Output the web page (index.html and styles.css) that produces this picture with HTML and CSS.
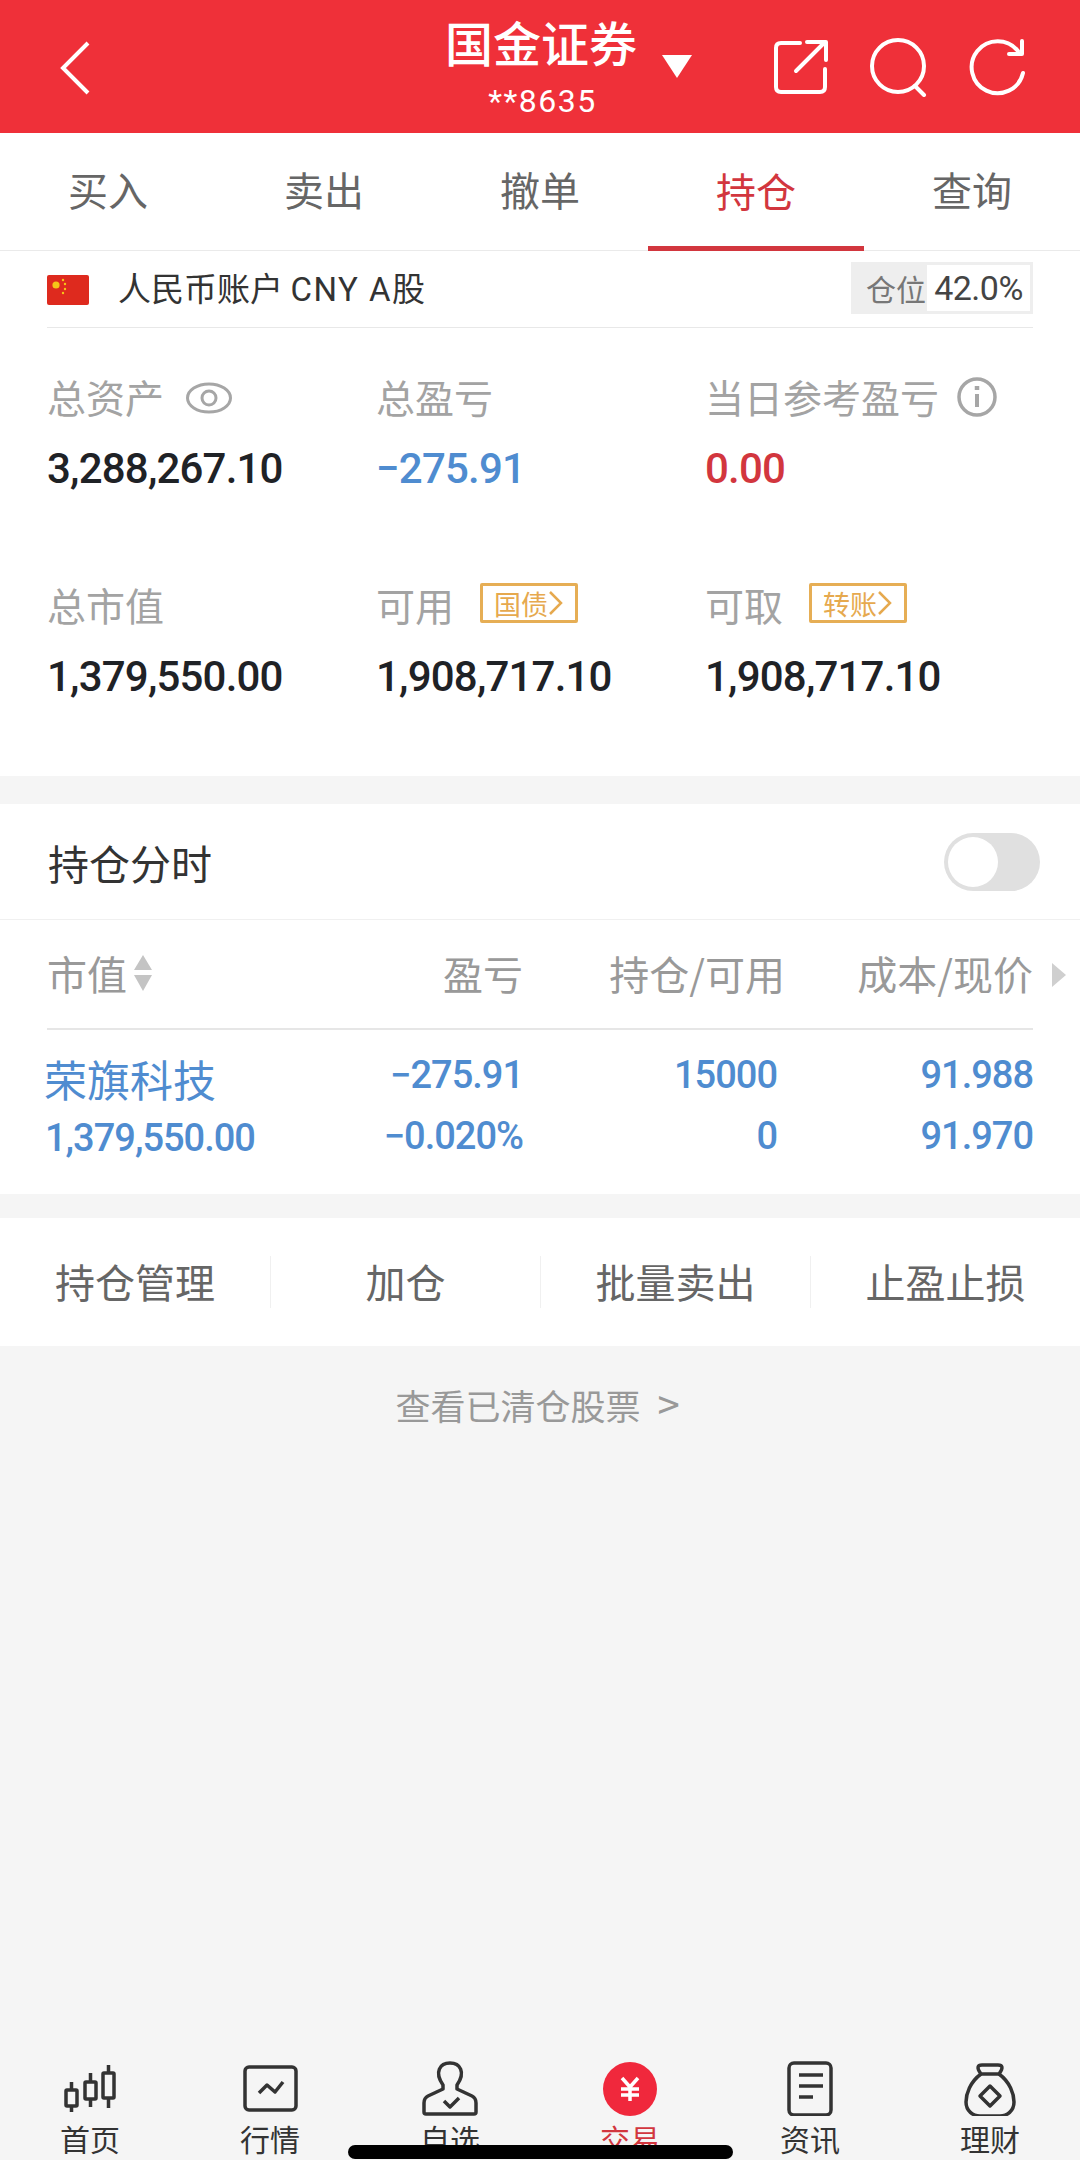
FILE: index.html
```html
<!DOCTYPE html>
<html lang="zh-CN">
<head>
    <meta charset="UTF-8">
    <meta name="viewport" content="width=device-width, initial-scale=1.0">
    <title>国金证券 持仓</title>
    <link rel="stylesheet" href="styles.css">
</head>
<body>
<div class="page">
    <!-- 顶部标题栏 -->
    <header class="topbar">
        <div class="topbar-left">
            <svg class="ico-back" width="34" height="56" viewBox="0 0 34 56"><path d="M30 3 L5 28 L30 53" fill="none" stroke="#fff" stroke-width="4"/></svg>
        </div>
        <div class="topbar-title">
            <div class="broker">国金证券<span class="caret"></span></div>
            <div class="account-no">**8635</div>
        </div>
        <div class="topbar-right">
            <svg width="56" height="56" viewBox="0 0 56 56" fill="none" stroke="#fff" stroke-width="4" stroke-linecap="round" stroke-linejoin="round">
                <path d="M27 4 H8 Q3 4 3 9 V48 Q3 53 8 53 H47 Q52 53 52 48 V30"/>
                <path d="M23 32 L51 4 M34 3 H53 V21"/>
            </svg>
            <svg width="60" height="60" viewBox="0 0 60 60" fill="none" stroke="#fff" stroke-width="4" stroke-linecap="round">
                <circle cx="29" cy="29" r="26"/>
                <path d="M46 49 L55 58"/>
            </svg>
            <svg width="58" height="60" viewBox="0 0 58 60" fill="none" stroke="#fff" stroke-width="4" stroke-linecap="round" stroke-linejoin="round">
                <path d="M54 36 A26 26 0 1 1 49 14"/>
                <path d="M53 4 V17 H40"/>
            </svg>
        </div>
    </header>

    <nav class="tabs">
        <div class="tab">买入</div>
        <div class="tab">卖出</div>
        <div class="tab">撤单</div>
        <div class="tab active">持仓</div>
        <div class="tab">查询</div>
    </nav>

    <!-- 资产概览 -->
    <section class="overview">
        <div class="account-row">
            <svg class="flag" width="42" height="30" viewBox="0 0 42 30">
                <rect width="42" height="30" rx="2" fill="#de2a1e"/>
                <circle cx="9" cy="10" r="3.6" fill="#f5c518"/>
                <circle cx="16" cy="5" r="1.2" fill="#f5c518"/>
                <circle cx="18" cy="9" r="1.2" fill="#f5c518"/>
                <circle cx="18" cy="14" r="1.2" fill="#f5c518"/>
                <circle cx="16" cy="18" r="1.2" fill="#f5c518"/>
            </svg>
            <span class="account-name">人民币账户 <span class="latin">CNY A</span>股</span>
            <div class="position">
                <span class="position-label">仓位</span>
                <span class="position-value">42.0%</span>
            </div>
        </div>
        <div class="stats">
            <div class="stat">
                <div class="stat-label">总资产
                    <svg class="eye" width="46" height="32" viewBox="0 0 46 32" fill="none" stroke="#a6a6a6" stroke-width="3">
                        <ellipse cx="23" cy="16" rx="21.5" ry="14"/>
                        <circle cx="23" cy="16" r="7"/>
                    </svg>
                </div>
                <div class="stat-value">3,288,267.10</div>
            </div>
            <div class="stat">
                <div class="stat-label">总盈亏</div>
                <div class="stat-value down">−275.91</div>
            </div>
            <div class="stat">
                <div class="stat-label">当日参考盈亏
                    <svg class="info" width="40" height="40" viewBox="0 0 40 40" fill="none" stroke="#a6a6a6">
                        <circle cx="20" cy="20" r="18" stroke-width="3.5"/>
                        <path d="M20 17 V30" stroke-width="4"/>
                        <path d="M20 9 V13" stroke-width="4.5"/>
                    </svg>
                </div>
                <div class="stat-value up">0.00</div>
            </div>
            <div class="stat">
                <div class="stat-label">总市值</div>
                <div class="stat-value">1,379,550.00</div>
            </div>
            <div class="stat">
                <div class="stat-label">可用
                    <span class="tag">国债<svg width="15" height="26" viewBox="0 0 15 26"><path d="M2 2 L13 13 L2 24" fill="none" stroke="#e6a94e" stroke-width="2.5"/></svg></span>
                </div>
                <div class="stat-value">1,908,717.10</div>
            </div>
            <div class="stat">
                <div class="stat-label">可取
                    <span class="tag">转账<svg width="15" height="26" viewBox="0 0 15 26"><path d="M2 2 L13 13 L2 24" fill="none" stroke="#e6a94e" stroke-width="2.5"/></svg></span>
                </div>
                <div class="stat-value">1,908,717.10</div>
            </div>
        </div>
    </section>

    <!-- 持仓列表 -->
    <section class="holdings">
        <div class="switch-row">
            <span>持仓分时</span>
            <div class="switch"><div class="knob"></div></div>
        </div>
        <div class="table-head">
            <div class="col-name">市值<svg class="sort" width="20" height="36" viewBox="0 0 20 36" fill="#c4c4c4"><path d="M10 0 L19 15 H1 Z"/><path d="M10 36 L19 20 H1 Z"/></svg></div>
            <div class="col-num">盈亏</div>
            <div class="col-num">持仓/可用</div>
            <div class="col-num">成本/现价</div>
            <svg class="more" width="14" height="24" viewBox="0 0 14 24" fill="#cfcfcf"><path d="M0 0 L14 12 L0 24 Z"/></svg>
        </div>
        <div class="table-row">
            <div class="col-name">
                <div class="stock-name">荣旗科技</div>
                <div class="figure">1,379,550.00</div>
            </div>
            <div class="col-num">
                <div class="figure">−275.91</div>
                <div class="figure">−0.020%</div>
            </div>
            <div class="col-num qty">
                <div class="figure">15000</div>
                <div class="figure">0</div>
            </div>
            <div class="col-num">
                <div class="figure">91.988</div>
                <div class="figure">91.970</div>
            </div>
        </div>
    </section>

    <section class="actions">
        <div class="action">持仓管理</div>
        <div class="action">加仓</div>
        <div class="action">批量卖出</div>
        <div class="action">止盈止损</div>
    </section>

    <div class="cleared">查看已清仓股票<span class="cleared-arrow">&gt;</span></div>

    <!-- 底部导航 -->
    <footer class="tabbar">
        <div class="nav-item">
            <svg width="60" height="56" viewBox="0 0 60 56" fill="none" stroke="#333" stroke-width="3.5">
                <rect x="6" y="30" width="11" height="16" rx="1"/><path d="M11.5 22 V30 M11.5 46 V52"/>
                <rect x="25" y="22" width="11" height="17" rx="1"/><path d="M30.5 13 V22 M30.5 39 V47"/>
                <rect x="43" y="13" width="11" height="25" rx="1"/><path d="M48.5 5 V13 M48.5 38 V48"/>
            </svg>
            <span>首页</span>
        </div>
        <div class="nav-item">
            <svg width="60" height="56" viewBox="0 0 60 56" fill="none" stroke="#333" stroke-width="3.5" stroke-linejoin="round">
                <rect x="5" y="7" width="51" height="43" rx="4"/>
                <path d="M19 33 L27 25 L35 32 L43 22"/>
            </svg>
            <span>行情</span>
        </div>
        <div class="nav-item">
            <svg width="60" height="56" viewBox="0 0 60 56" fill="none" stroke="#333" stroke-width="3.5" stroke-linejoin="round">
                <path d="M23 25 C14 12 20 3 30 3 C40 3 46 12 37 25 L37 29 L52 36 Q56 38 56 43 L56 52 Q56 54 54 54 L6 54 Q4 54 4 52 L4 43 Q4 38 8 36 L23 29 Z"/>
                <path d="M24 41 L30 47 L39 38"/>
            </svg>
            <span>自选</span>
        </div>
        <div class="nav-item active">
            <svg width="60" height="56" viewBox="0 0 60 56" fill="none" stroke="#fff" stroke-width="3.5">
                <circle cx="30" cy="29" r="27" fill="#f0283c" stroke="none"/>
                <path d="M22 18 L30 27 L38 18 M21 29 H39 M21 35 H39 M30 27 V41"/>
            </svg>
            <span>交易</span>
        </div>
        <div class="nav-item">
            <svg width="60" height="56" viewBox="0 0 60 56" fill="none" stroke="#333" stroke-width="3.5">
                <rect x="9" y="3" width="42" height="52" rx="5"/>
                <path d="M19 15 H43 M19 26 H43 M19 37 H33"/>
            </svg>
            <span>资讯</span>
        </div>
        <div class="nav-item">
            <svg width="60" height="56" viewBox="0 0 60 56" fill="none" stroke="#333" stroke-width="3.5" stroke-linejoin="round">
                <path d="M21 14 C16 7 18 5 22 5 H38 C42 5 44 7 39 14 Z"/>
                <path d="M21 14 C10 22 6 34 6 42 C6 51 13 56 20 56 H40 C47 56 54 51 54 42 C54 34 50 22 39 14"/>
                <path d="M30 26 L40 36 L30 46 L20 36 Z"/>
            </svg>
            <span>理财</span>
        </div>
    </footer>
    <div class="home-bar"></div>
</div>
</body>
</html>
```

FILE: styles.css
```css
* { box-sizing: border-box; margin: 0; padding: 0; }
body { font-family: "Noto Sans CJK SC", "Noto Sans", sans-serif; background-color: #f5f5f5; }
.page { position: relative; width: 1080px; height: 2160px; display: flex; flex-direction: column; overflow: hidden; background-color: #f5f5f5; }

/* header */
.topbar { height: 133px; background-color: #ef3039; color: #fff; display: grid; grid-template-columns: 1fr auto 1fr; align-items: center; padding: 0 53px 0 58px; }
.topbar-left { display: flex; align-items: center; height: 100%; padding-top: 2px; }
.topbar-title { align-self: start; text-align: center; }
.broker { position: relative; font-size: 48px; font-weight: 500; line-height: 54px; margin-top: 14px; margin-left: -3px; }
.caret { position: absolute; left: 100%; top: 41px; margin-left: 25px; width: 0; height: 0; border-left: 15px solid transparent; border-right: 15px solid transparent; border-top: 23px solid #fff; }
.account-no { font-family: Roboto, sans-serif; font-size: 32px; line-height: 38px; letter-spacing: 1.5px; margin-top: 14px; }
.topbar-right { display: flex; justify-content: flex-end; align-items: center; gap: 40px; }

/* tabs */
.tabs { display: flex; height: 118px; background-color: #fff; border-bottom: 1px solid #eaeaea; }
.tab { flex: 1; display: flex; align-items: center; justify-content: center; font-size: 40px; color: #666; border-bottom: 5px solid transparent; }
.tab.active { color: #d2363e; border-bottom-color: #d2363e; margin-bottom: -1px; }

/* overview */
.overview { background-color: #fff; height: 525px; padding: 0 47px; }
.account-row { display: flex; align-items: center; height: 77px; border-bottom: 1px solid #e8e8e8; }
.flag { margin-right: 29px; margin-top: 1px; }
.account-name { font-size: 33px; line-height: 44px; color: #333; flex: 1; margin-top: -1px; }
.latin { font-family: Roboto, sans-serif; letter-spacing: 1.5px; }
.position { display: flex; align-items: center; width: 182px; height: 52px; background-color: #eeeeee; padding: 3px; font-size: 30px; margin-top: -3px; }
.position-label { width: 73px; text-align: right; padding-right: 1px; line-height: 46px; color: #777; }
.position-value { flex: 1; height: 100%; background-color: #fff; color: #444; font-family: Roboto, sans-serif; font-size: 34px; letter-spacing: -0.5px; line-height: 46px; text-align: center; }
.stats { display: grid; grid-template-columns: 329px 329px 1fr; row-gap: 89px; padding-top: 47px; }
.stat-label { display: flex; align-items: center; height: 44px; padding-bottom: 3px; font-size: 39px; color: #a3a3a3; }
.eye { margin-left: 22px; margin-top: 5px; }
.info { margin-left: 18px; margin-top: 3px; }
.stat-value { height: 50px; margin-top: 25px; font-family: Roboto, sans-serif; font-size: 42px; letter-spacing: -0.8px; line-height: 50px; font-weight: 500; color: #1f2226; }
.stat-value.down { color: #4f8cd0; }
.stat-value.up { color: #d2363e; }
.tag { display: inline-flex; align-items: center; gap: 0; height: 40px; width: 98px; margin-left: 26px; margin-top: -1px; padding-left: 11px; border: 3px solid #e6ae55; border-radius: 2px; font-size: 27px; color: #e6a94e; }

/* holdings table */
.holdings { background-color: #fff; margin-top: 28px; }
.switch-row { display: flex; align-items: center; justify-content: space-between; height: 116px; padding: 0 40px 0 48px; border-bottom: 1px solid #f0f0f0; font-size: 41px; color: #333; }
.switch { width: 96px; height: 58px; border-radius: 29px; background-color: #e0e0e0; padding: 4px; margin-top: 1px; }
.knob { width: 50px; height: 50px; border-radius: 50%; background-color: #fff; }
.table-head, .table-row { display: grid; grid-template-columns: 250px 226px 262px 248px; margin: 0 47px; }
.table-head { position: relative; height: 110px; padding-bottom: 3px; align-items: center; border-bottom: 2px solid #e6e6e6; font-size: 40px; color: #999; }
.col-name { display: flex; align-items: center; }
.col-num { text-align: right; }
.sort { margin-left: 6px; }
.more { position: absolute; left: 1005px; top: 43px; }
.table-row { height: 164px; color: #4f8cd0; }
.table-row .col-name { flex-direction: column; align-items: flex-start; }
.stock-name { font-size: 43px; line-height: 60px; margin: 18px 0 0 -3px; }
.figure { font-family: Roboto, sans-serif; font-size: 38px; letter-spacing: -1px; line-height: 61px; font-weight: 500; }
.col-num .figure:first-child { margin-top: 15px; }
.table-row .col-name .figure { margin-left: -2px; }
.qty { padding-right: 8px; }

/* actions */
.actions { display: grid; grid-template-columns: repeat(4, 270px); align-items: center; height: 128px; margin-top: 24px; background-color: #fff; }
.action { height: 52px; line-height: 50px; text-align: center; font-size: 40px; color: #666; border-left: 1px solid #f0f0f0; }
.action:first-child { border-left: none; }
.cleared { margin-top: 31px; padding-right: 5px; font-size: 35px; line-height: 52px; color: #999; text-align: center; }
.cleared-arrow { margin-left: 17px; font-size: 40px; }

/* bottom navigation */
.tabbar { margin-top: auto; height: 100px; display: grid; grid-template-columns: repeat(6, 180px); }
.nav-item { display: flex; flex-direction: column; align-items: center; font-size: 30px; line-height: 36px; color: #333; }
.nav-item span { margin-top: 4px; }
.nav-item.active { color: #d2363e; }
.home-bar { position: absolute; left: 348px; top: 2145px; width: 385px; height: 14px; border-radius: 7px; background-color: #000; }
```
